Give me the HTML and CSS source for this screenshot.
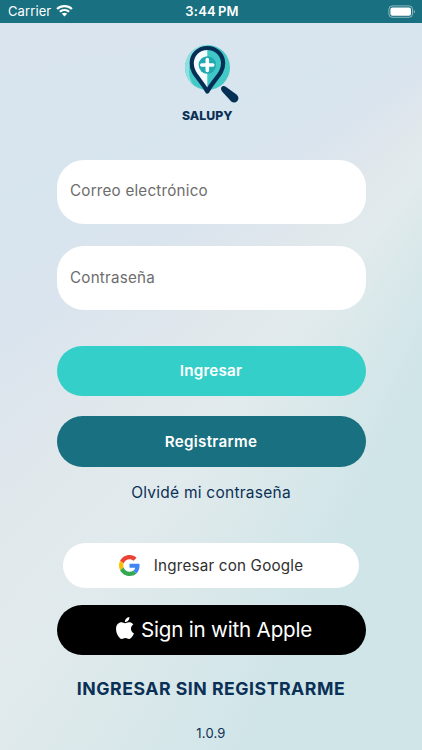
FILE: index.html
```html
<!DOCTYPE html>
<html lang="es">
<head>
  <meta charset="UTF-8">
  <meta name="viewport" content="width=device-width, initial-scale=1.0">
  <title>Salupy | Ingresar</title>
  <link rel="stylesheet" href="styles.css">
</head>
<body>
  <div class="status-bar">
    <div class="carrier">
      <span>Carrier</span>
      <svg width="17" height="12" viewBox="0 0 17 12" fill="#fff">
        <path d="M8.5 0C5.300 0 2.400 1.200 .3 3.200L1.900 4.800C3.600 3.200 5.900 2.200 8.500 2.200S13.400 3.200 15.100 4.800L16.700 3.200C14.600 1.200 11.700 0 8.500 0Z"/>
        <path d="M8.500 3.900C6.400 3.900 4.500 4.700 3.100 6L4.700 7.600C5.700 6.700 7 6.100 8.500 6.100S11.300 6.700 12.300 7.600L13.900 6C12.500 4.700 10.600 3.900 8.500 3.900Z"/>
        <path d="M8.500 7.700C7.500 7.700 6.600 8.100 5.900 8.700L8.500 11.400L11.100 8.700C10.400 8.100 9.500 7.700 8.500 7.700Z"/>
      </svg>
    </div>
    <span class="time">3:44<span class="pm">PM</span></span>
    <svg class="battery" width="28" height="13" viewBox="0 0 28 13">
      <rect x=".9" y=".9" width="23.600" height="11.400" rx="3.300" fill="none" stroke="#fff" stroke-opacity=".5"/>
      <rect x="2.400" y="2.400" width="20.600" height="8.400" rx="2" fill="#fff"/>
      <path d="M25.800 4.700V8.500C27.300 7.900 27.300 5.300 25.800 4.700Z" fill="#fff" fill-opacity=".5"/>
    </svg>
  </div>

  <div class="login">
    <div class="logo">
      <svg width="56" height="60" viewBox="0 0 56 60">
        <circle cx="24.500" cy="22.500" r="22.500" fill="#43c9c6"/>
        <path d="M24.500 0A22.500 22.500 0 0 0 10 39.700C3 28 4 11 24.500 0Z" fill="#8edfdf"/>
        <path d="M24.300 3C15 3 8.700 10 8.700 18.500C8.700 29 17 33 24.300 46.500C31.600 33 40.100 29 40.100 18.500C40.100 10 33.600 3 24.300 3Z" fill="#3fc8c5"/>
        <path d="M24.300 3C15 3 8.700 10 8.700 18.500C8.700 29 17 33 24.300 46.500Z" fill="#f4fbfc"/>
        <path d="M24.300 3C15 3 8.700 10 8.700 18.500C8.700 29 17 33 24.300 46.500C31.600 33 40.100 29 40.100 18.500C40.100 10 33.600 3 24.300 3Z" fill="none" stroke="#062f55" stroke-width="4.200" stroke-linejoin="round"/>
        <circle cx="24.300" cy="20" r="8.700" fill="#20a9b0"/>
        <path d="M24.300 14.500V25.500M18.800 20H29.800" stroke="#fff" stroke-width="3.600" stroke-linecap="round"/>
        <path d="M38.500 42C39.500 40.700 41.300 40.700 42.800 41.700L53.500 49.500C58 53.500 53.500 59.500 48.500 56.800L40 47.500C38.300 45.500 37.500 43.500 38.500 42Z" fill="#062f55"/>
      </svg>
      <span class="brand">SALUPY</span>
    </div>

    <form class="login-form">
      <input type="text" id="email" placeholder="Correo electrónico">
      <input type="password" id="password" placeholder="Contraseña">
      <button type="submit" class="btn btn-login">Ingresar</button>
      <button type="button" class="btn btn-register">Registrarme</button>
    </form>

    <a class="forgot">Olvidé mi contraseña</a>

    <button class="btn btn-google">
      <svg width="21" height="21" viewBox="0 0 48 48">
        <path fill="#EA4335" d="M24 9.500c3.540 0 6.710 1.220 9.210 3.600l6.850-6.850C35.900 2.380 30.470 0 24 0 14.620 0 6.510 5.380 2.560 13.220l7.980 6.190C12.430 13.720 17.740 9.500 24 9.500z"/>
        <path fill="#4285F4" d="M46.980 24.550c0-1.570-.15-3.090-.38-4.550H24v9.020h12.940c-.58 2.960-2.260 5.480-4.780 7.180l7.730 6c4.510-4.180 7.090-10.360 7.090-17.650z"/>
        <path fill="#FBBC05" d="M10.530 28.590c-.48-1.450-.76-2.990-.76-4.590s.27-3.140.76-4.590l-7.980-6.190C.92 16.460 0 20.120 0 24c0 3.880.92 7.540 2.560 10.780l7.970-6.190z"/>
        <path fill="#34A853" d="M24 48c6.480 0 11.930-2.130 15.890-5.810l-7.730-6c-2.150 1.450-4.920 2.300-8.160 2.300-6.260 0-11.570-4.220-13.470-9.910l-7.980 6.190C6.510 42.620 14.620 48 24 48z"/>
      </svg>
      <span>Ingresar con Google</span>
    </button>

    <button class="btn btn-apple">
      <svg width="18" height="22" viewBox="0 0 814 1000" fill="#fff">
        <path d="M788.100 340.900c-5.800 4.500-108.200 62.200-108.200 190.500 0 148.400 130.300 200.900 134.200 202.200-.6 3.200-20.700 71.900-68.700 141.900-42.800 61.600-87.500 123.100-155.500 123.100s-85.500-39.500-164-39.500c-76.500 0-103.700 40.800-165.900 40.800s-105.600-57-155.500-127C46.700 790.700 0 663 0 541.800c0-194.400 126.400-297.500 250.800-297.500 66.100 0 121.200 43.400 162.700 43.400 39.500 0 101.100-46 176.300-46 28.500 0 130.900 2.600 198.300 99.200zM554.100 159.400c31.100-36.900 53.100-88.100 53.100-139.300 0-7.100-.6-14.300-1.900-20.100-50.600 1.900-110.800 33.700-147.100 75.800-28.500 32.400-55.100 83.600-55.100 135.500 0 7.800 1.300 15.600 1.900 18.100 3.200.6 8.400 1.300 13.600 1.300 45.400 0 102.500-30.400 135.500-71.300z"/>
      </svg>
      <span>Sign in with Apple</span>
    </button>

    <a class="guest">INGRESAR SIN REGISTRARME</a>
    <p class="version">1.0.9</p>
  </div>
</body>
</html>
```

FILE: styles.css
```css
* { box-sizing: border-box; }
body {
  margin: 0; height: 750px; overflow: hidden;
  font-family: Inter, "Liberation Sans", sans-serif;
  color: #0b3055;
  background: conic-gradient(from 0deg at 600px -40px,
    #cfe5e8 0deg, #cfe5e8 203deg, #e1eaec 219deg, #e0e8ec 227deg,
    #dae4ee 238deg, #d7e5ee 248deg, #dae4ee 265deg, #dae4ee 360deg);
}
.status-bar {
  display: grid; grid-template-columns: 1fr auto 1fr; align-items: center;
  height: 22.5px; padding: 0 6px 0 8px;
  background: #187080; color: #fff; font-size: 13px;
}
.carrier { display: flex; align-items: center; gap: 5px; letter-spacing: 0.1px; }
.time { font-weight: 600; letter-spacing: 0.2px; }
.pm { margin-left: 2px; }
.battery { justify-self: end; }

.login { display: flex; flex-direction: column; align-items: center; }
.logo { width: 56px; height: 77px; margin: 22.5px 0 0 0; }
.logo svg { display: block; }
.brand {
  display: block; margin: 3px 0 0 -1px;
  font-size: 12.3px; line-height: 15px; font-weight: 800;
}
.login-form {
  display: flex; flex-direction: column;
  width: 309px; margin-top: 37.5px;
}
input {
  height: 64px; margin-bottom: 22.5px; padding: 0 13.5px 2px;
  border: none; border-radius: 27px; background: #fff;
  font-family: inherit; font-size: 15.2px; letter-spacing: 0.22px;
}
input::placeholder { color: #6d6d6d; opacity: 1; }
.btn {
  display: flex; align-items: center; justify-content: center;
  padding: 0; border: none; border-radius: 26px; cursor: pointer;
  font-family: inherit; font-size: 15.2px; letter-spacing: 0.2px;
}
.btn-login, .btn-register { height: 50.5px; color: #fff; font-weight: 600; }
.btn-login { margin-top: 13px; background: #35cfca; }
.btn-register { margin-top: 20px; background: #187080; letter-spacing: 0.3px; }
.forgot {
  margin-top: 16px; font-size: 15.5px; line-height: 20px; letter-spacing: 0.25px;
}
.btn-google {
  width: 296px; height: 45px; margin-top: 40px; gap: 14px;
  background: #fff; color: #303030;
}
.btn-apple {
  width: 309px; height: 50px; margin-top: 17.5px; gap: 7px;
  padding: 0 0 1px 6px;
  background: #000; color: #fff; font-size: 20.6px; letter-spacing: -0.2px;
}
.btn-apple svg { margin-bottom: 4px; }
.guest {
  margin-top: 21.5px; font-size: 17.7px; line-height: 24px;
  font-weight: 700; letter-spacing: 0.5px;
}
.version { margin: 23.5px 0 0; font-size: 13px; line-height: 18px; letter-spacing: 0.2px; }
```
